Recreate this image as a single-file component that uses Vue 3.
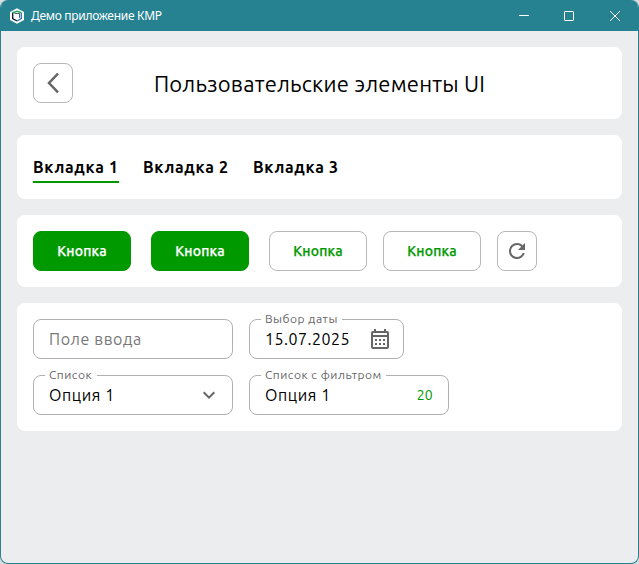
<script setup>
import { ref } from 'vue'

const tabs = ['Вкладка 1', 'Вкладка 2', 'Вкладка 3']
const activeTab = ref(0)
</script>

<template>
  <div class="window">
    <header class="titlebar">
      <svg class="logo" width="16" height="16" viewBox="0 0 16 16">
        <path d="M8 .3 15 4v8L8 15.700 1 12V4z" fill="#fff" />
        <path d="M3.700 4.500v6L8 13" fill="none" stroke="#101c3a" stroke-width="1.400" />
        <path d="M12.300 5v5.500L8 13" fill="none" stroke="#3475ba" stroke-width="1.400" />
        <path d="M3.500 4.800 8 3.300l4.500 1.500" fill="none" stroke="#24a957" stroke-width="1.500" />
        <path d="M5.500 5.500h5v4.300" fill="none" stroke="#101c3a" stroke-width=".7" />
      </svg>
      <span class="app-name">Демо приложение КМР</span>
      <div class="controls">
        <svg width="12" height="12" viewBox="0 0 12 12"><path d="M2 5.500h10" /></svg>
        <svg width="12" height="12" viewBox="0 0 12 12"><rect x="1.500" y="1.500" width="9" height="9" rx=".5" /></svg>
        <svg width="12" height="12" viewBox="0 0 12 12"><path d="m1 1 10 10M11 1 1 11" /></svg>
      </div>
    </header>

    <main class="content">
      <section class="panel heading">
        <button class="icon-button">
          <svg width="38" height="38" viewBox="0 0 38 38"><path d="m24 9.700-9 9.300 9 9.300" fill="none" stroke="#666" stroke-width="2.500" /></svg>
        </button>
        <h1>Пользовательские элементы UI</h1>
      </section>

      <nav class="panel tabs">
        <button
          v-for="(tab, i) in tabs"
          :key="tab"
          class="tab"
          :class="{ active: activeTab === i }"
          @click="activeTab = i"
        >{{ tab }}</button>
      </nav>

      <section class="panel buttons">
        <button class="button filled">Кнопка</button>
        <button class="button filled second">Кнопка</button>
        <button class="button third">Кнопка</button>
        <button class="button">Кнопка</button>
        <button class="icon-button">
          <svg width="24" height="24" viewBox="0 0 24 24"><path fill="#666" d="M17.650 6.350A7.958 7.958 0 0 0 12 4a8 8 0 1 0 7.730 10h-2.080A6 6 0 1 1 12 6c1.660 0 3.140.69 4.220 1.780L13 11h7V4z" /></svg>
        </button>
      </section>

      <section class="panel fields">
        <div class="row">
          <div class="field wide"><span class="value placeholder">Поле ввода</span></div>
          <fieldset class="field date">
            <legend><span>Выбор даты</span></legend>
            <span class="value digits">15.07.2025</span>
            <svg width="20" height="22" viewBox="0 0 20 22" fill="#666">
              <path fill-rule="evenodd" d="M4 1h2v2h8V1h2v2h1a2 2 0 0 1 2 2v14a2 2 0 0 1-2 2H3a2 2 0 0 1-2-2V5a2 2 0 0 1 2-2h1zM3 5v2h14V5zM3 9v10h14V9z" />
              <path d="M5 11h2v2H5zm4 0h2v2H9zm4 0h2v2h-2zM5 15h2v2H5zm4 0h2v2H9zm4 0h2v2h-2z" />
            </svg>
          </fieldset>
        </div>
        <div class="row">
          <fieldset class="field wide">
            <legend><span>Список</span></legend>
            <span class="value">Опция 1</span>
            <svg class="chevron" width="16" height="16" viewBox="0 0 16 16"><path d="m2.700 5.300 5.300 5.300 5.300-5.300" fill="none" stroke="#666" stroke-width="2" /></svg>
          </fieldset>
          <fieldset class="field wide">
            <legend><span>Список с фильтром</span></legend>
            <span class="value">Опция 1</span>
            <span class="count">20</span>
          </fieldset>
        </div>
      </section>
    </main>
  </div>
</template>

<style>
body {
  background: #d8dcde;
}
</style>

<style scoped>
* {
  box-sizing: border-box;
}
.window {
  height: 564px;
  border: 1px solid #268191;
  border-top: 0;
  border-radius: 8px;
  overflow: hidden;
  background: #ecedef;
  font-family: Ubuntu, "Noto Sans", sans-serif;
  color: #000;
}
.titlebar {
  height: 31px;
  padding-left: 8px;
  display: flex;
  align-items: center;
  background: #268191;
}
.logo {
  margin-right: 6px;
}
.app-name {
  font-family: "Noto Sans", sans-serif;
  font-size: 12px;
  line-height: 16px;
  letter-spacing: -0.3px;
  color: #fff;
}
.controls {
  margin-left: auto;
  padding-right: 17px;
  display: flex;
  gap: 34px;
}
.controls svg {
  fill: none;
  stroke: #fff;
  stroke-width: 1;
}
.content {
  padding: 16px;
  display: flex;
  flex-direction: column;
  gap: 16px;
}
.panel {
  padding: 16px;
  border-radius: 8px;
  background: #fff;
}
button {
  font-family: inherit;
  padding: 0;
}
.heading {
  height: 72px;
  display: flex;
}
.icon-button {
  width: 40px;
  height: 40px;
  flex: none;
  display: flex;
  align-items: center;
  justify-content: center;
  border: 1px solid #b8b8b8;
  border-radius: 8px;
  background: #fff;
}
h1 {
  flex: 1;
  margin: 0 40px 0 0;
  padding-top: 1px;
  font-size: 22px;
  line-height: 40px;
  font-weight: 400;
  letter-spacing: 0.2px;
  text-align: center;
  white-space: nowrap;
}
.tabs {
  height: 64px;
  display: flex;
  gap: 24px;
}
.tab {
  width: 86px;
  height: 32px;
  padding-top: 1px;
  border: 0;
  border-bottom: 2px solid transparent;
  background: none;
  font-size: 16px;
  font-weight: 700;
  line-height: 30px;
  letter-spacing: 0.7px;
  text-align: left;
  white-space: nowrap;
  color: #000;
}
.tab.active {
  border-color: #090;
}
.buttons {
  height: 72px;
  display: flex;
  gap: 16px;
}
.button {
  width: 98px;
  height: 40px;
  border: 1px solid #b8b8b8;
  border-radius: 8px;
  background: #fff;
  color: #090;
  font-size: 14px;
  font-weight: 500;
  line-height: 38px;
  letter-spacing: 0.2px;
  -webkit-text-stroke: 0.25px currentColor;
}
.filled {
  border-color: #090;
  background: #090;
  color: #fff;
}
.second,
.third {
  margin-left: 4px;
}
.fields {
  display: flex;
  flex-direction: column;
  gap: 16px;
}
.row {
  display: flex;
  gap: 16px;
}
.field {
  height: 40px;
  min-width: 0;
  margin: 0;
  padding: 0 15px;
  border: 1px solid #b0b0b0;
  border-radius: 8px;
  display: flex;
  align-items: center;
  justify-content: space-between;
}
.wide {
  width: 200px;
}
.date {
  width: 155px;
  padding-right: 13px;
}
legend {
  height: 1px;
  margin-left: -4px;
  padding: 0 4.500px 0 4px;
  line-height: 1px;
}
legend span {
  display: block;
  margin-top: -1px;
  font-size: 12px;
  letter-spacing: 0.5px;
  white-space: nowrap;
  color: #666;
}
.value {
  font-size: 16px;
  line-height: 38px;
  letter-spacing: 0.6px;
  white-space: nowrap;
}
.digits {
  letter-spacing: 0.5px;
}
.placeholder {
  color: #777;
}
.count {
  color: #090;
  font-size: 14px;
  letter-spacing: 0.25px;
}
.chevron {
  flex: none;
}
</style>
